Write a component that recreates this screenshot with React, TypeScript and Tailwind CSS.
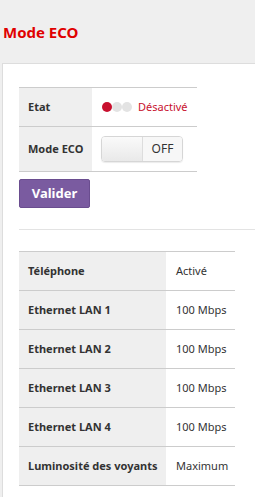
export default function App() {
  const ports = [
    ["Téléphone", "Activé"],
    ["Ethernet LAN 1", "100 Mbps"],
    ["Ethernet LAN 2", "100 Mbps"],
    ["Ethernet LAN 3", "100 Mbps"],
    ["Ethernet LAN 4", "100 Mbps"],
    ["Luminosité des voyants", "Maximum"],
  ];

  return (
    <div className="min-h-screen bg-[#efefef] font-['Noto_Sans',sans-serif] text-[#333] overflow-hidden pt-[22px]">
      <h1 className="pl-[3px] text-[15px] leading-[20px] font-bold text-[#e00000]">
        Mode ECO
      </h1>

      <div className="mt-[21px] ml-[2px] bg-white border border-r-0 border-[#dddddd] pl-[16px] pt-[23px] pb-[20px]">
        <div className="w-[178px] border-b border-[#cccccc] text-[11px]">
          <div className="flex h-[39px] border-t border-[#cccccc]">
            <div className="w-[73px] bg-[#efefef] pl-[9px] flex items-center font-bold">
              Etat
            </div>
            <div className="flex items-center pl-[10px]">
              <span className="w-[10px] h-[10px] rounded-full bg-[#c8102e]" />
              <span className="w-[10px] h-[10px] rounded-full bg-[#e3e3e3]" />
              <span className="w-[10px] h-[10px] rounded-full bg-[#e3e3e3]" />
              <span className="ml-[6px] text-[#c8102e]">Désactivé</span>
            </div>
          </div>
          <div className="flex h-[45px] border-t border-[#cccccc]">
            <div className="w-[73px] bg-[#efefef] pl-[9px] flex items-center font-bold">
              Mode ECO
            </div>
            <div className="flex items-center pl-[9px]">
              <div className="flex w-[82px] h-[26px] rounded-[4px] border border-[#d6d6d6] overflow-hidden shadow-[0_1px_1px_rgba(0,0,0,0.08)]">
                <div className="w-[41px] bg-gradient-to-b from-[#fafafa] to-[#e9e9e9] border-r border-[#dddddd]" />
                <div className="flex-1 flex items-center justify-center bg-[#f7f7f7] text-[12px] text-[#333]">
                  OFF
                </div>
              </div>
            </div>
          </div>
        </div>

        <button className="mt-[7px] w-[71px] h-[29px] rounded-[2px] bg-[#7a5ba0] border border-[#6a4d8f] text-white text-[13px] font-bold">
          Valider
        </button>

        <div className="mt-[21px] border-t border-[#e3e3e3]" />

        <div className="mt-[21px] w-[216px] border-b border-[#cccccc] text-[11px]">
          {ports.map(([label, value]) => (
            <div key={label} className="flex h-[39px] border-t border-[#cccccc]">
              <div className="w-[147px] bg-[#efefef] pl-[9px] flex items-center font-bold">
                {label}
              </div>
              <div className="flex items-center pl-[10px]">{value}</div>
            </div>
          ))}
        </div>
      </div>
    </div>
  );
}
